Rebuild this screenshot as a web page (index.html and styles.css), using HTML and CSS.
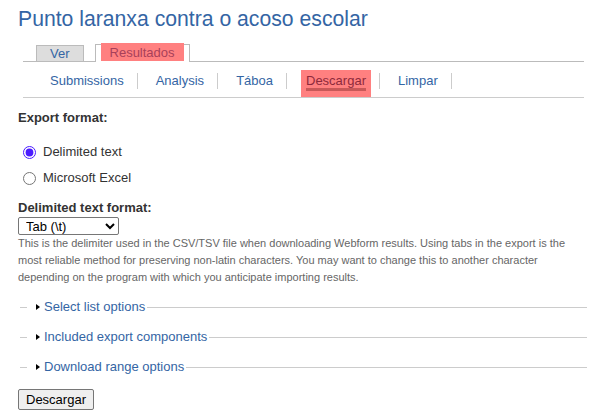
FILE: index.html
```html
<!DOCTYPE html>
<html lang="gl">
<head>
<meta charset="utf-8">
<title>Punto laranxa contra o acoso escolar</title>
<link rel="stylesheet" href="styles.css">
</head>
<body>
<div class="page">
  <h1 class="title">Punto laranxa contra o acoso escolar</h1>

  <ul class="tabs-primary">
    <li class="tab"><a href="#">Ver</a></li>
    <li class="tab tab-active"><a href="#">Resultados</a></li>
  </ul>

  <ul class="tabs-secondary">
    <li class="subtab"><a href="#">Submissions</a></li>
    <li class="subtab"><a href="#">Analysis</a></li>
    <li class="subtab"><a href="#">Táboa</a></li>
    <li class="subtab subtab-active"><a href="#"><span class="subtab-label">Descargar</span></a></li>
    <li class="subtab"><a href="#">Limpar</a></li>
  </ul>

  <form class="export-form">
    <div class="form-label">Export format:</div>
    <div class="radios">
      <label class="radio-row"><input type="radio" name="format" checked> Delimited text</label>
      <label class="radio-row"><input type="radio" name="format"> Microsoft Excel</label>
    </div>

    <div class="form-label form-label-tight">Delimited text format:</div>
    <select class="select">
      <option>Tab (\t)</option>
      <option>Comma (,)</option>
      <option>Semicolon (;)</option>
    </select>
    <div class="description">This is the delimiter used in the CSV/TSV file when downloading Webform results. Using tabs in the export is the most reliable method for preserving non-latin characters. You may want to change this to another character depending on the program with which you anticipate importing results.</div>

    <div class="collapsed">
      <a class="collapsed-legend" href="#">Select list options</a>
    </div>
    <div class="collapsed">
      <a class="collapsed-legend" href="#">Included export components</a>
    </div>
    <div class="collapsed">
      <a class="collapsed-legend" href="#">Download range options</a>
    </div>

    <button type="button" class="button">Descargar</button>
  </form>
</div>
</body>
</html>
```

FILE: styles.css
```css
html, body {
  margin: 0;
  padding: 0;
  background: #ffffff;
}

body {
  font-family: "Liberation Sans", Arial, sans-serif;
  font-size: 13px;
  color: #333333;
}

a {
  color: #3465a4;
  text-decoration: none;
}

.page {
  padding: 0 18px;
}

.title {
  margin: 6px 0 0;
  font-size: 21.2px;
  line-height: 25px;
  font-weight: normal;
  color: #3465a4;
}

/* primary tabs */
.tabs-primary {
  list-style: none;
  margin: 13px 5px 0;
  padding: 0 0 0 13px;
  display: flex;
  align-items: flex-end;
  gap: 11px;
  border-bottom: 1px solid #bbbbbb;
  height: 17px;
}

.tab {
  border: 1px solid #bbbbbb;
  border-bottom: 0;
  background: #dddddd;
  padding: 0 13px;
  line-height: 15px;
  height: 15px;
}

.tab-active {
  background: #ffffff;
  padding: 0 5px 1px 5px;
  height: 16px;
  margin-bottom: -1px;
}

.tab-active a {
  display: block;
  margin-top: -2px;
  height: 17px;
  padding: 1px 9px 0;
  line-height: 17px;
  background: #ff8080;
  color: #a8405a;
}

/* secondary tabs */
.tabs-secondary {
  list-style: none;
  margin: 0 5px;
  padding: 11px 0 8px 9px;
  display: flex;
  border-bottom: 1px solid #cccccc;
}

.subtab {
  line-height: 16px;
  padding: 0 8px 0 13px;
  border-right: 1px solid #cccccc;
}

.subtab a {
  padding: 0 5px;
}

.subtab-active {
  padding-left: 14px;
}

.subtab-active a {
  padding: 3px 5px 9px;
  background: #ff8080;
  color: #8e2a3c;
}

.subtab-label {
  border-bottom: 3px solid #c85858;
}

/* form */
.export-form {
  display: flex;
  flex-direction: column;
  align-items: flex-start;
}

.form-label {
  font-weight: bold;
  line-height: 16px;
  margin-top: 12px;
}

.form-label-tight {
  margin-top: 14px;
}

.radios {
  display: flex;
  flex-direction: column;
  gap: 10px;
  margin-top: 18px;
}

.radio-row {
  display: flex;
  align-items: center;
  line-height: 16px;
  padding-left: 5px;
  gap: 7px;
  color: #333333;
}

.radio-row input {
  margin: 0;
  width: 13px;
  height: 13px;
  accent-color: #4a1cff;
}

.select {
  margin-top: 1px;
  width: 101px;
  height: 18px;
  font-family: "Liberation Sans", Arial, sans-serif;
  font-size: 13px;
  color: #000000;
  border: 1px solid #767676;
  border-radius: 2px;
  background: #ffffff;
  padding: 0 0 0 3px;
}

.description {
  font-size: 11px;
  line-height: 17px;
  color: #666666;
  margin-top: 0;
  width: 571px;
}

.collapsed {
  align-self: stretch;
  display: flex;
  align-items: center;
  margin: 13px 2px 0;
  height: 16px;
}

.collapsed + .collapsed {
  margin-top: 14px;
}

.collapsed::before {
  content: "";
  width: 7px;
  border-top: 1px solid #cccccc;
}

.collapsed::after {
  content: "";
  flex: 1;
  border-top: 1px solid #cccccc;
}

.collapsed-legend {
  position: relative;
  padding: 0 2px 0 17px;
  line-height: 16px;
}

.collapsed-legend::before {
  content: "";
  position: absolute;
  left: 9px;
  top: 5px;
  border-left: 4px solid #000000;
  border-top: 3.5px solid transparent;
  border-bottom: 3.5px solid transparent;
}

.button {
  margin-top: 14px;
  font-family: "Liberation Sans", Arial, sans-serif;
  font-size: 13px;
  color: #000000;
  background: #efefef;
  border: 1px solid #767676;
  border-radius: 2px;
  height: 21px;
  padding: 0 7px;
}
```
